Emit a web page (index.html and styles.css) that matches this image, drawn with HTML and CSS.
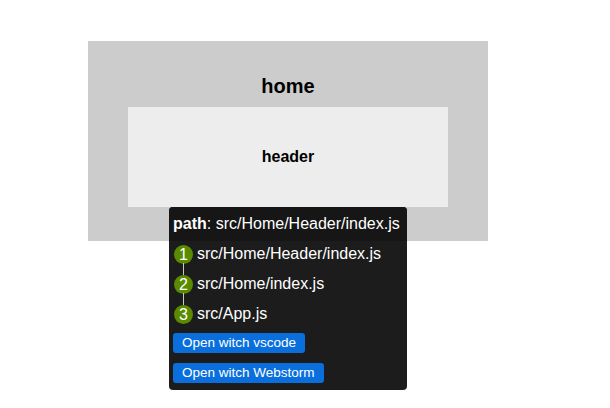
FILE: index.html
```html
<!DOCTYPE html>
<html>
<head>
<meta charset="utf-8">
<link rel="stylesheet" href="styles.css">
</head>
<body>
<div class="page">
  <div class="home">
    <h2 class="home-title">home</h2>
    <div class="header">
      <h3 class="header-title">header</h3>
    </div>
  </div>
  <div class="tip">
    <div class="tip-head"><b>path</b>: src/Home/Header/index.js</div>
    <ul class="chain">
      <li class="chain-item"><span class="num">1</span><span class="file">src/Home/Header/index.js</span></li>
      <li class="chain-item"><span class="num">2</span><span class="file">src/Home/index.js</span></li>
      <li class="chain-item last"><span class="num">3</span><span class="file">src/App.js</span></li>
    </ul>
    <div class="actions">
      <button class="btn">Open witch vscode</button>
      <button class="btn">Open witch Webstorm</button>
    </div>
  </div>
</div>
</body>
</html>
```
FILE: styles.css
```css
html, body {
  margin: 0;
  padding: 0;
  background: #fff;
  height: 100%;
}
body {
  font-family: "Liberation Sans", Arial, sans-serif;
  color: #000;
}
.page {
  position: relative;
  height: 408px;
  box-sizing: border-box;
  padding: 41px 0 0 88px;
}
.home {
  width: 400px;
  height: 200px;
  background: #cccccc;
  box-sizing: border-box;
  padding: 0 40px;
  display: flex;
  flex-direction: column;
  align-items: stretch;
}
.home-title {
  margin: 0;
  height: 66px;
  display: flex;
  align-items: center;
  justify-content: center;
  font-size: 20px;
  font-weight: 700;
  padding-top: 38px;
  box-sizing: border-box;
  padding-bottom: 13px;
}
.header {
  height: 100px;
  background: #ededed;
  display: flex;
  align-items: center;
  justify-content: center;
}
.header-title {
  margin: 0;
  font-size: 16px;
  font-weight: 700;
}
.tip {
  position: absolute;
  left: 169px;
  top: 207px;
  width: 238px;
  height: 183px;
  background: #1c1c1c;
  border-radius: 4px;
  color: #fff;
  box-sizing: border-box;
  overflow: hidden;
}
.tip-head {
  height: 34px;
  background: #161616;
  font-size: 16px;
  line-height: 34px;
  padding: 0 4px;
  white-space: nowrap;
}
.tip-head b {
  font-weight: 700;
}
.chain {
  list-style: none;
  margin: -2px 0 0;
  padding: 0 0 0 5px;
}
.chain-item {
  position: relative;
  height: 30px;
  display: flex;
  align-items: center;
  gap: 4px;
  font-size: 16px;
}
.chain-item:not(.last)::after {
  content: "";
  position: absolute;
  left: 9px;
  top: 24px;
  width: 1px;
  height: 12px;
  background: #c8c8c8;
}
.num {
  flex: 0 0 19px;
  width: 19px;
  height: 19px;
  border-radius: 50%;
  background: #5a8a00;
  color: #fff;
  font-size: 16px;
  line-height: 19px;
  text-align: center;
}
.actions {
  display: flex;
  flex-direction: column;
  align-items: flex-start;
  gap: 10px;
  padding: 4px 0 0 4px;
}
.btn {
  font-family: inherit;
  height: 20px;
  padding: 0 9px;
  border: none;
  border-radius: 3px;
  background: #0a6fdc;
  color: #fff;
  font-size: 13.5px;
  line-height: 20px;
}
```
